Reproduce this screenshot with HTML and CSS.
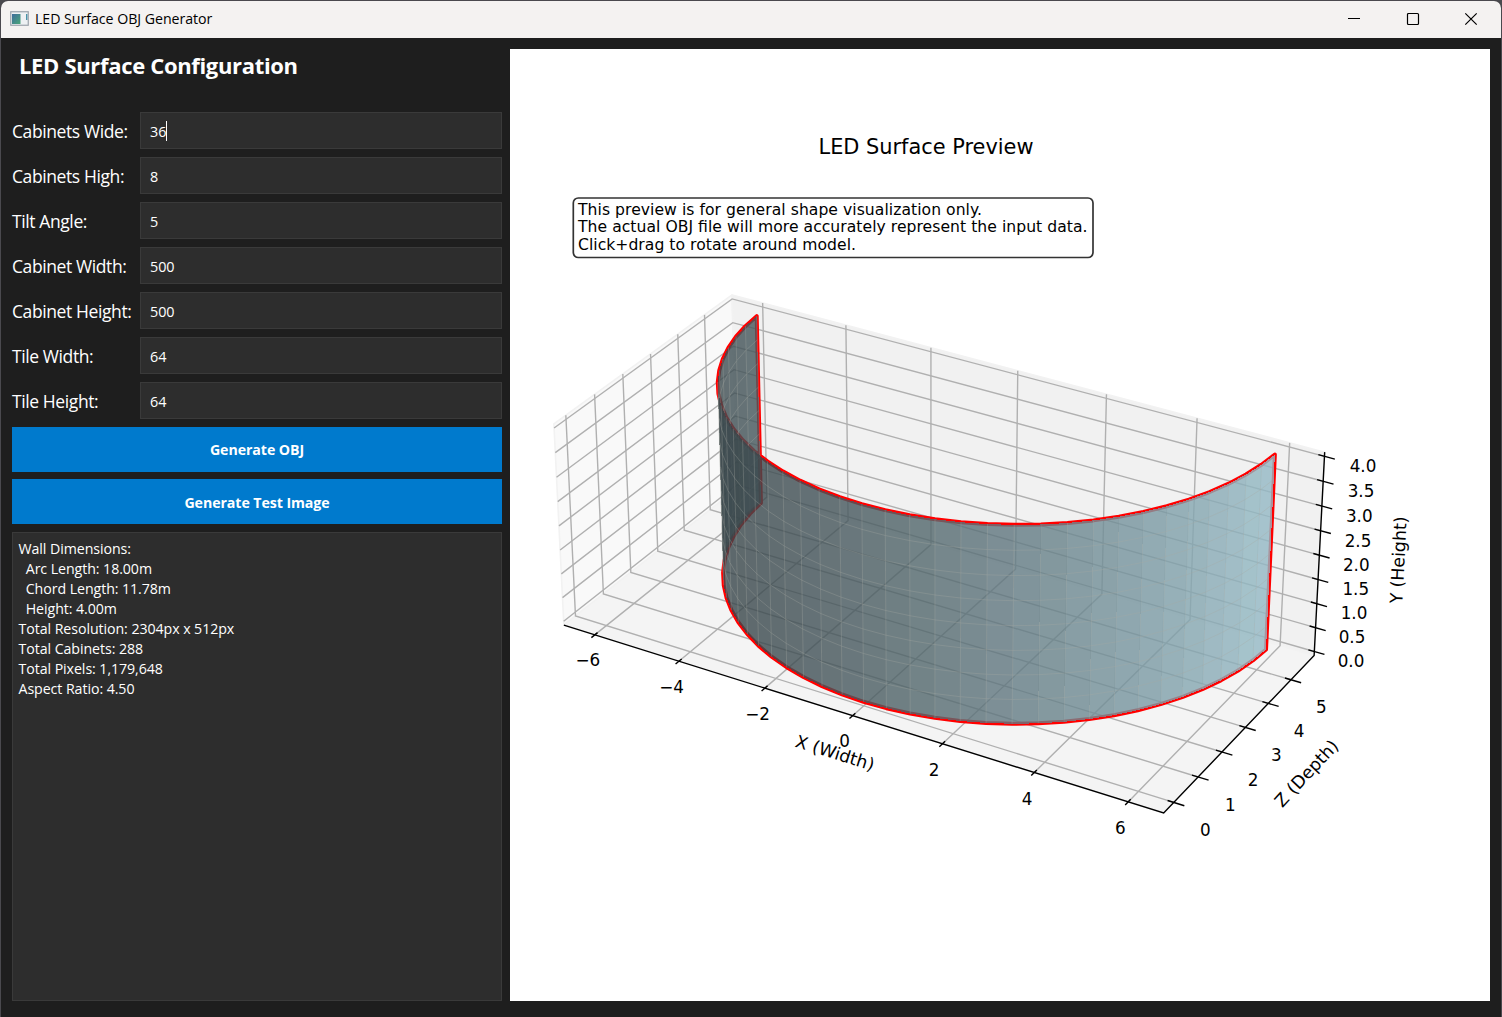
FILE: index.html
```
<!DOCTYPE html>
<html lang="en">
<head>
<meta charset="utf-8">
<title>LED Surface OBJ Generator</title>
<link rel="stylesheet" href="styles.css">
</head>
<body>
<div class="window">
  <header class="titlebar">
    <svg class="app-icon" width="20" height="16" viewBox="0 0 20 16">
      <defs><linearGradient id="screen" x1="0" y1="0" x2="1" y2="1"><stop offset="0" stop-color="#3f6d9c"/><stop offset="1" stop-color="#49a678"/></linearGradient></defs>
      <rect x=".75" y=".75" width="17.5" height="13.5" fill="#eef1f3" stroke="#9aa3ab" stroke-width="1.2"/>
      <rect x="2" y="3" width="8.5" height="10" fill="url(#screen)"/>
      <rect x="16" y="3" width="1.4" height="6" fill="#4b93a8"/>
    </svg>
    <span class="window-title">LED Surface OBJ Generator</span>
    <div class="window-controls">
      <svg width="14" height="14" viewBox="0 0 14 14"><path d="M1 6.5H13"/></svg>
      <svg width="14" height="14" viewBox="0 0 14 14"><rect x="1.5" y="1.5" width="11" height="11" rx="1"/></svg>
      <svg width="14" height="14" viewBox="0 0 14 14"><path d="M1.3 1.3L12.7 12.7M12.7 1.3L1.3 12.7"/></svg>
    </div>
  </header>
  <main class="content">
    <section class="sidebar">
      <h1 class="heading">LED Surface Configuration</h1>
      <div class="form">
        <div class="row"><span class="label">Cabinets Wide:</span><div class="field">36<i class="caret"></i></div></div>
        <div class="row"><span class="label">Cabinets High:</span><div class="field">8</div></div>
        <div class="row"><span class="label">Tilt Angle:</span><div class="field">5</div></div>
        <div class="row"><span class="label">Cabinet Width:</span><div class="field">500</div></div>
        <div class="row"><span class="label">Cabinet Height:</span><div class="field">500</div></div>
        <div class="row"><span class="label">Tile Width:</span><div class="field">64</div></div>
        <div class="row"><span class="label">Tile Height:</span><div class="field">64</div></div>
      </div>
      <button class="action">Generate OBJ</button>
      <button class="action action-image">Generate Test Image</button>
      <pre class="info">Wall Dimensions:
  Arc Length: 18.00m
  Chord Length: 11.78m
  Height: 4.00m
Total Resolution: 2304px x 512px
Total Cabinets: 288
Total Pixels: 1,179,648
Aspect Ratio: 4.50</pre>
    </section>
    <section class="preview">
      <svg id="plot" class="plot" width="980" height="952" viewBox="510 49 980 952"></svg>
    </section>
  </main>
</div>
<script src="plot.js"></script>
</body>
</html>
```

FILE: styles.css
```
* { box-sizing: border-box; }
body { margin: 0; background: #4a4a4e; font-family: "Open Sans", "Noto Sans", sans-serif; }
.window { width: 1502px; height: 1017px; display: flex; flex-direction: column; border: 1px solid #4a494e; border-bottom: 0; border-radius: 8px 8px 0 0; overflow: hidden; background: #1e1e1e; }
.titlebar { height: 37px; flex: none; display: flex; align-items: center; padding: 0 23px 2px 9px; background: #f4f2f1; color: #000; }
.app-icon { margin-right: 5px; }
.window-title { font-size: 14.2px; letter-spacing: -0.04px; }
.window-controls { margin-left: auto; display: flex; gap: 44.5px; }
.window-controls svg { display: block; fill: none; stroke: #000; stroke-width: 1.2; }
.content { flex: 1; min-height: 0; display: flex; gap: 8px; padding: 11px 11px 16px; color: #fff; }
.sidebar { width: 490px; display: flex; flex-direction: column; }
.heading { margin: 0 0 0 7px; height: 63px; font-size: 22px; line-height: 33px; font-weight: 700; letter-spacing: -0.33px; }
.form { display: flex; flex-direction: column; gap: 8px; }
.row { display: flex; height: 37px; align-items: center; }
.label { width: 128px; font-size: 17.5px; letter-spacing: -0.4px; white-space: nowrap; }
.field { flex: 1; height: 37px; display: flex; align-items: center; padding: 1px 9px 0; background: #2d2d2d; border: 1px solid #3a3a3a; font-size: 14.4px; letter-spacing: -0.1px; }
.caret { width: 1px; height: 20px; background: #fff; }
.action { margin: 8px 0 0; height: 45px; flex: none; border: 0; background: #007acd; color: #fff; font: 700 14.2px "Open Sans", sans-serif; letter-spacing: -0.08px; padding: 0; }
.action-image { margin-top: 7px; padding-top: 2px; }
.info { flex: 1; margin: 8px 0 0; padding: 6px 5.5px; background: #2d2d2d; border: 1px solid #3a3a3a; font: 14.2px/20px "Open Sans", "Noto Sans", sans-serif; letter-spacing: -0.07px; }
.preview { flex: 1; background: #fff; }
.plot { display: block; }
.plot text { font-family: "DejaVu Sans", sans-serif; font-size: 16.8px; fill: #000; }
.plot .axis-title { font-size: 17.4px; }
.plot .plot-title { font-size: 20.9px; }
.plot .note { font-size: 15.6px; }
.note-box { fill: #fff; stroke: #333; stroke-width: 1.7; }
.pane { stroke: #f2f2f2; stroke-width: 1.6; stroke-linejoin: round; }
.grid { fill: none; stroke: #b0b0b0; stroke-width: 1.4; }
.axis { fill: none; stroke: #000; stroke-width: 1.4; }
.outline { fill: none; stroke: #f00; stroke-width: 4; stroke-linejoin: round; }
.mesh { fill: none; stroke: #a5aaa2; stroke-opacity: .42; stroke-width: .75; }
```

FILE: plot.js
```
// Perspective camera: world (x width, z depth, y height) to page pixels.
const U = [39.6047, 34.5473, -6.1178, 863.6068];
const V = [9.9547, -17.3429, -52.7364, 701.7973];
const W = [-0.0054569, 0.00927195, -0.00656773, 1];
const dot = (m, x, z, y) => m[0] * x + m[1] * z + m[2] * y + m[3];
const pt = (x, z, y) => {
  const d = dot(W, x, z, y);
  return (dot(U, x, z, y) / d).toFixed(2) + ' ' + (dot(V, x, z, y) / d).toFixed(2);
};
const path = (pts, close) => 'M' + pts.map(p => pt(...p)).join('L') + (close ? 'Z' : '');
const range = (a, b, s = 1) => { const r = []; for (let v = a; v <= b + 1e-9; v += s) r.push(v); return r; };

// Axis limits
const X0 = -6.745, X1 = 6.745, Z0 = -0.411, Z1 = 6.047, Y0 = -0.0833, Y1 = 4.0833;
const xs = range(-6, 6, 2), zs = range(0, 5), ys = range(0, 4, 0.5);
const out = [];
const add = (cls, d, extra = '') => out.push(`<path class="${cls}" d="${d}" ${extra}/>`);
const text = (x, y, s, cls = '', extra = 'text-anchor="middle"') =>
  out.push(`<text x="${x}" y="${y}" class="${cls}" ${extra}>${s}</text>`);

// Panes
add('pane', path([[X0, Z0, Y0], [X0, Z1, Y0], [X0, Z1, Y1], [X0, Z0, Y1]], true), 'fill="#f9f9f9"');
add('pane', path([[X0, Z1, Y0], [X1, Z1, Y0], [X1, Z1, Y1], [X0, Z1, Y1]], true), 'fill="#f1f1f1"');
add('pane', path([[X0, Z0, Y0], [X1, Z0, Y0], [X1, Z1, Y0], [X0, Z1, Y0]], true), 'fill="#f4f4f4"');

// Grid lines
xs.forEach(x => add('grid', path([[x, Z0, Y0], [x, Z1, Y0], [x, Z1, Y1]])));
zs.forEach(z => add('grid', path([[X1, z, Y0], [X0, z, Y0], [X0, z, Y1]])));
ys.forEach(y => add('grid', path([[X0, Z0, y], [X0, Z1, y], [X1, Z1, y]])));

// Axis lines and ticks
add('axis', path([[X0, Z0, Y0], [X1, Z0, Y0], [X1, Z1, Y0], [X1, Z1, Y1]]));
xs.forEach(x => add('axis', path([[x, Z0 - 0.12, Y0], [x, Z0 + 0.1, Y0]])));
zs.forEach(z => add('axis', path([[X1 - 0.13, z, Y0], [X1 + 0.22, z, Y0]])));
ys.forEach(y => add('axis', path([[X1 - 0.13, Z1, y], [X1 + 0.22, Z1, y]])));

// Curved wall
const COLS = 36, ROWS = 8, H = 4;
const SWEEP = 175 * Math.PI / 180, R = 18 / SWEEP;
const angle = i => -SWEEP / 2 + SWEEP * i / COLS;
const wall = (i, y) => [R * Math.sin(angle(i)), R * (1 - Math.cos(angle(i))), y];
const cols = range(0, COLS);
add('outline', path([...cols.map(i => wall(i, 0)), ...cols.slice().reverse().map(i => wall(i, H))], true));

const strips = range(0, COLS - 1).map(i => {
  const a = angle(i + 0.5);
  const light = 0.667 * Math.sin(a) - 0.667 * Math.cos(a);
  const shade = 0.3 + 0.7 * (light + 1) / 2;
  const p = wall(i + 0.5, 0);
  return { i, shade: Math.min(shade, 0.85), depth: dot(W, p[0], p[1], 0) };
}).sort((a, b) => b.depth - a.depth);
strips.forEach(({ i, shade }) => {
  const rgb = [173, 216, 230].map(c => Math.round(c * shade)).join(',');
  add('', path([wall(i, 0), wall(i + 1, 0), wall(i + 1, H), wall(i, H)], true),
    `fill="rgba(${rgb},.8)" shape-rendering="crispEdges"`);
  add('mesh', path([wall(i, 0), wall(i, H)]));
  for (let r = 1; r < ROWS; r++) add('mesh', path([wall(i, r * H / ROWS), wall(i + 1, r * H / ROWS)]));
});

// Tick labels
[[587.8, 666, '−6'], [671.7, 692.7, '−4'], [757.5, 719.7, '−2'], [844.5, 746.7, '0'], [934, 775.8, '2'],
 [1027, 804.8, '4'], [1120.3, 833.8, '6'],
 [1205.3, 835.5, '0'], [1230.3, 811, '1'], [1253, 786, '2'], [1276.3, 761, '3'], [1299, 736.8, '4'], [1321.3, 712.5, '5'],
 [1363, 471.5, '4.0'], [1361, 496.9, '3.5'], [1359.3, 521.8, '3.0'], [1358, 546.5, '2.5'], [1356.3, 571, '2.0'],
 [1355.8, 595, '1.5'], [1354, 619, '1.0'], [1352, 643.2, '0.5'], [1351, 667, '0.0']
].forEach(l => text(...l));
text(0, 6, 'X (Width)', 'axis-title', 'text-anchor="middle" transform="translate(835 753) rotate(17.4)"');
text(0, 6, 'Z (Depth)', 'axis-title', 'text-anchor="middle" transform="translate(1306.5 773.5) rotate(-47)"');
text(0, 6, 'Y (Height)', 'axis-title', 'text-anchor="middle" transform="translate(1398.5 560) rotate(-87)"');

// Title and note
text(926, 153.5, 'LED Surface Preview', 'plot-title', 'text-anchor="middle" textLength="215"');
out.push('<rect class="note-box" x="573.3" y="198" width="519.7" height="59.5" rx="5"/>');
text(578, 215, 'This preview is for general shape visualization only.', 'note', 'textLength="404"');
text(578, 232, 'The actual OBJ file will more accurately represent the input data.', 'note', 'textLength="509.5"');
text(578, 250, 'Click+drag to rotate around model.', 'note', 'textLength="278"');

document.getElementById('plot').innerHTML = out.join('');
```
